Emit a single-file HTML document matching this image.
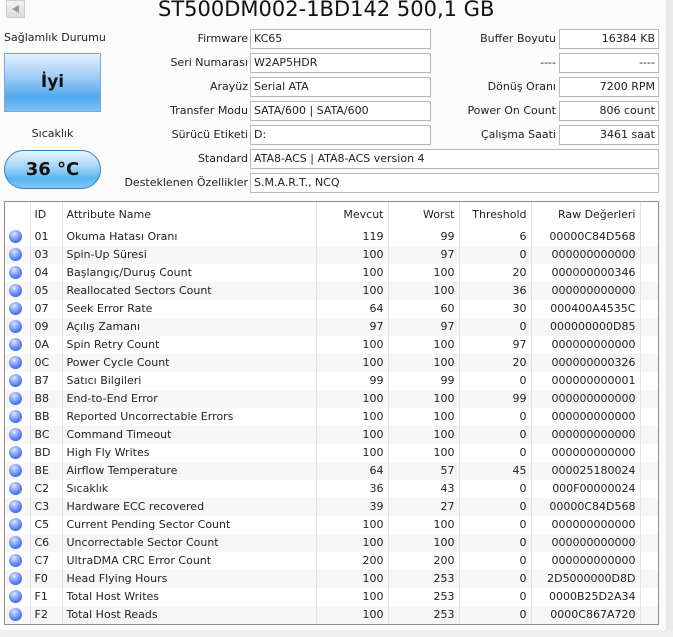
<!DOCTYPE html>
<html><head><meta charset="utf-8"><style>
*{margin:0;padding:0;box-sizing:border-box}
body{width:673px;height:637px;overflow:hidden;background:#fbfbfb;font-family:"DejaVu Sans","Liberation Sans",sans-serif;font-size:11px;color:#222;position:relative}
.a{position:absolute;white-space:nowrap}
.lbl{position:absolute;text-align:right;height:20px;line-height:20px}
.box{position:absolute;height:20px;line-height:18px;border:1px solid #b8b8b8;background:#fff;padding:0 3px}
.r{text-align:right}
table{border-collapse:collapse;position:absolute;left:5px;top:202px;width:653px;table-layout:fixed}
td{height:18px;line-height:18px;padding:0 4px;white-space:nowrap;overflow:hidden}
tr.h td{height:26px}
tr:nth-child(odd):not(.h) td{background:#f6f6f6}
td.s{border-right:1px solid #e4e4e4}
.dot{display:inline-block;width:13px;height:13px;border-radius:50%;background:radial-gradient(circle at 40% 30%,#dfe8ff 0,#8aa6ff 35%,#3d5fe0 80%,#3050c8 100%);vertical-align:middle;margin-top:-2px}
</style></head><body>
<div class="a" style="left:6px;top:0;width:19px;height:18px;background:linear-gradient(#f4f4f4,#dcdcdc);border:1px solid #ccc"><div style="position:absolute;left:5px;top:4px;border-right:7px solid #999;border-top:4px solid transparent;border-bottom:4px solid transparent"></div></div>
<div class="a" style="left:158px;top:-3px;font-size:21px;line-height:24px;font-family:'DejaVu Sans',sans-serif;color:#111;">ST500DM002-1BD142 500,1 GB</div>
<div class="a" style="left:4px;top:31px;width:100px;text-align:center">Sağlamlık Durumu</div>
<div class="a" style="left:4px;top:53px;width:97px;height:59px;border:1px solid #7aa8d8;background:linear-gradient(#e4f1ff 0,#9fcdf6 40%,#52a8ee 75%,#7cc0f4 100%);text-align:center;line-height:56px;font-size:17px;font-weight:bold;color:#111">İyi</div>
<div class="a" style="left:4px;top:127px;width:97px;text-align:center">Sıcaklık</div>
<div class="a" style="left:4px;top:150px;width:97px;height:39px;border:1px solid #3a7fc8;border-radius:20px;background:linear-gradient(#e6f4ff 0,#a8d8fa 40%,#58b4f0 75%,#80c8f6 100%);text-align:center;line-height:37px;font-size:18px;font-weight:bold;color:#111">36 °C</div>

<div class="lbl" style="left:100px;width:148px;top:29px">Firmware</div><div class="box" style="left:250px;width:181px;top:29px">KC65</div>
<div class="lbl" style="left:100px;width:148px;top:53px">Seri Numarası</div><div class="box" style="left:250px;width:181px;top:53px">W2AP5HDR</div>
<div class="lbl" style="left:100px;width:148px;top:77px">Arayüz</div><div class="box" style="left:250px;width:181px;top:77px">Serial ATA</div>
<div class="lbl" style="left:100px;width:148px;top:101px">Transfer Modu</div><div class="box" style="left:250px;width:181px;top:101px">SATA/600 | SATA/600</div>
<div class="lbl" style="left:100px;width:148px;top:125px">Sürücü Etiketi</div><div class="box" style="left:250px;width:181px;top:125px">D:</div>
<div class="lbl" style="left:100px;width:148px;top:149px">Standard</div><div class="box" style="left:250px;width:409px;top:149px">ATA8-ACS | ATA8-ACS version 4</div>
<div class="lbl" style="left:100px;width:148px;top:173px">Desteklenen Özellikler</div><div class="box" style="left:250px;width:409px;top:173px">S.M.A.R.T., NCQ</div>

<div class="lbl" style="left:430px;width:126px;top:29px">Buffer Boyutu</div><div class="box r" style="left:559px;width:100px;top:29px">16384 KB</div>
<div class="lbl" style="left:430px;width:126px;top:53px">----</div><div class="box r" style="left:559px;width:100px;top:53px">----</div>
<div class="lbl" style="left:430px;width:126px;top:77px">Dönüş Oranı</div><div class="box r" style="left:559px;width:100px;top:77px">7200 RPM</div>
<div class="lbl" style="left:430px;width:126px;top:101px">Power On Count</div><div class="box r" style="left:559px;width:100px;top:101px">806 count</div>
<div class="lbl" style="left:430px;width:126px;top:125px">Çalışma Saati</div><div class="box r" style="left:559px;width:100px;top:125px">3461 saat</div>

<div class="a" style="left:4px;top:201px;width:655px;height:424px;border:1px solid #8c8c8c;background:#fff"></div>
<div class="a" style="left:666px;top:0;width:7px;height:637px;background:#eaeaea"></div>
<div class="a" style="left:0;top:630px;width:673px;height:7px;background:#efefef"></div>
<table>
<colgroup><col style="width:25px"><col style="width:32px"><col style="width:254px"><col style="width:72px"><col style="width:71px"><col style="width:72px"><col style="width:109px"><col></colgroup>
<tr class="h"><td class="s"></td><td class="s">ID</td><td class="s">Attribute Name</td><td class="s r">Mevcut</td><td class="s r">Worst</td><td class="s r">Threshold</td><td class="s r">Raw Değerleri</td><td></td></tr>
<tr><td class="s"><span class="dot"></span></td><td class="s">01</td><td class="s">Okuma Hatası Oranı</td><td class="s r">119</td><td class="s r">99</td><td class="s r">6</td><td class="s r">00000C84D568</td><td></td></tr>
<tr><td class="s"><span class="dot"></span></td><td class="s">03</td><td class="s">Spin-Up Süresi</td><td class="s r">100</td><td class="s r">97</td><td class="s r">0</td><td class="s r">000000000000</td><td></td></tr>
<tr><td class="s"><span class="dot"></span></td><td class="s">04</td><td class="s">Başlangıç/Duruş Count</td><td class="s r">100</td><td class="s r">100</td><td class="s r">20</td><td class="s r">000000000346</td><td></td></tr>
<tr><td class="s"><span class="dot"></span></td><td class="s">05</td><td class="s">Reallocated Sectors Count</td><td class="s r">100</td><td class="s r">100</td><td class="s r">36</td><td class="s r">000000000000</td><td></td></tr>
<tr><td class="s"><span class="dot"></span></td><td class="s">07</td><td class="s">Seek Error Rate</td><td class="s r">64</td><td class="s r">60</td><td class="s r">30</td><td class="s r">000400A4535C</td><td></td></tr>
<tr><td class="s"><span class="dot"></span></td><td class="s">09</td><td class="s">Açılış Zamanı</td><td class="s r">97</td><td class="s r">97</td><td class="s r">0</td><td class="s r">000000000D85</td><td></td></tr>
<tr><td class="s"><span class="dot"></span></td><td class="s">0A</td><td class="s">Spin Retry Count</td><td class="s r">100</td><td class="s r">100</td><td class="s r">97</td><td class="s r">000000000000</td><td></td></tr>
<tr><td class="s"><span class="dot"></span></td><td class="s">0C</td><td class="s">Power Cycle Count</td><td class="s r">100</td><td class="s r">100</td><td class="s r">20</td><td class="s r">000000000326</td><td></td></tr>
<tr><td class="s"><span class="dot"></span></td><td class="s">B7</td><td class="s">Satıcı Bilgileri</td><td class="s r">99</td><td class="s r">99</td><td class="s r">0</td><td class="s r">000000000001</td><td></td></tr>
<tr><td class="s"><span class="dot"></span></td><td class="s">B8</td><td class="s">End-to-End Error</td><td class="s r">100</td><td class="s r">100</td><td class="s r">99</td><td class="s r">000000000000</td><td></td></tr>
<tr><td class="s"><span class="dot"></span></td><td class="s">BB</td><td class="s">Reported Uncorrectable Errors</td><td class="s r">100</td><td class="s r">100</td><td class="s r">0</td><td class="s r">000000000000</td><td></td></tr>
<tr><td class="s"><span class="dot"></span></td><td class="s">BC</td><td class="s">Command Timeout</td><td class="s r">100</td><td class="s r">100</td><td class="s r">0</td><td class="s r">000000000000</td><td></td></tr>
<tr><td class="s"><span class="dot"></span></td><td class="s">BD</td><td class="s">High Fly Writes</td><td class="s r">100</td><td class="s r">100</td><td class="s r">0</td><td class="s r">000000000000</td><td></td></tr>
<tr><td class="s"><span class="dot"></span></td><td class="s">BE</td><td class="s">Airflow Temperature</td><td class="s r">64</td><td class="s r">57</td><td class="s r">45</td><td class="s r">000025180024</td><td></td></tr>
<tr><td class="s"><span class="dot"></span></td><td class="s">C2</td><td class="s">Sıcaklık</td><td class="s r">36</td><td class="s r">43</td><td class="s r">0</td><td class="s r">000F00000024</td><td></td></tr>
<tr><td class="s"><span class="dot"></span></td><td class="s">C3</td><td class="s">Hardware ECC recovered</td><td class="s r">39</td><td class="s r">27</td><td class="s r">0</td><td class="s r">00000C84D568</td><td></td></tr>
<tr><td class="s"><span class="dot"></span></td><td class="s">C5</td><td class="s">Current Pending Sector Count</td><td class="s r">100</td><td class="s r">100</td><td class="s r">0</td><td class="s r">000000000000</td><td></td></tr>
<tr><td class="s"><span class="dot"></span></td><td class="s">C6</td><td class="s">Uncorrectable Sector Count</td><td class="s r">100</td><td class="s r">100</td><td class="s r">0</td><td class="s r">000000000000</td><td></td></tr>
<tr><td class="s"><span class="dot"></span></td><td class="s">C7</td><td class="s">UltraDMA CRC Error Count</td><td class="s r">200</td><td class="s r">200</td><td class="s r">0</td><td class="s r">000000000000</td><td></td></tr>
<tr><td class="s"><span class="dot"></span></td><td class="s">F0</td><td class="s">Head Flying Hours</td><td class="s r">100</td><td class="s r">253</td><td class="s r">0</td><td class="s r">2D5000000D8D</td><td></td></tr>
<tr><td class="s"><span class="dot"></span></td><td class="s">F1</td><td class="s">Total Host Writes</td><td class="s r">100</td><td class="s r">253</td><td class="s r">0</td><td class="s r">0000B25D2A34</td><td></td></tr>
<tr><td class="s"><span class="dot"></span></td><td class="s">F2</td><td class="s">Total Host Reads</td><td class="s r">100</td><td class="s r">253</td><td class="s r">0</td><td class="s r">0000C867A720</td><td></td></tr>
</table>
</body></html>
